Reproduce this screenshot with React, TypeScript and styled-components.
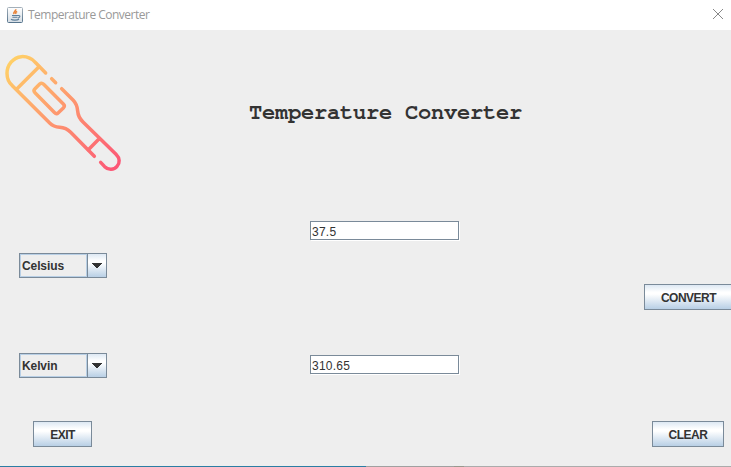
import React, { useState } from "react";
import styled, { createGlobalStyle } from "styled-components";

const GlobalStyle = createGlobalStyle`
  * { box-sizing: border-box; }
  html, body { margin: 0; padding: 0; overflow: hidden; background: #eeeeee; }
`;

const Frame = styled.div`
  display: flex;
  flex-direction: column;
  width: 731px;
  height: 467px;
  overflow: hidden;
  background: #eeeeee;
  color: #333333;
  font-family: "Liberation Sans", Arial, sans-serif;
  font-size: 12px;
`;

const TitleBar = styled.header`
  display: flex;
  align-items: center;
  flex: 0 0 30px;
  padding: 0 7px;
  background: #ffffff;
`;

const TitleText = styled.span`
  flex: 1;
  margin-left: 5px;
  color: #999999;
  font: 12px/16px "Open Sans", "Noto Sans", sans-serif;
  letter-spacing: -0.52px;
`;

const CloseButton = styled.button`
  display: flex;
  margin-top: -2px;
  padding: 0;
  border: 0;
  background: none;
`;

const Content = styled.main`
  display: flex;
  flex-direction: column;
  flex: 1;
`;

const Banner = styled.section`
  display: flex;
  height: 191px;
  padding-top: 15px;
`;

const Heading = styled.h1`
  margin: 53px 0 0 119px;
  font: bold 22px/28px "Nimbus Mono PS", "FreeMono", "Courier New", "Liberation Mono", monospace;
  letter-spacing: -0.2px;
  white-space: pre;
`;

const Row = styled.div<{ $gap?: number; $left?: number }>`
  display: flex;
  align-items: flex-start;
  flex: none;
  margin-top: ${(p) => p.$gap ?? 0}px;
  padding-left: ${(p) => p.$left ?? 0}px;
`;

const Field = styled.input<{ $left?: number; $top?: number }>`
  width: 149px;
  height: 19px;
  margin: ${(p) => p.$top ?? 0}px 0 0 ${(p) => p.$left ?? 0}px;
  padding: 2px 1px 0;
  border: 1px solid #7a8a99;
  border-radius: 0;
  outline: none;
  background: #ffffff;
  box-shadow: 1px 1px 0 #ffffff;
  color: #333333;
  font: 12px/15px "Liberation Sans", Arial, sans-serif;
  letter-spacing: 0.25px;
`;

const Combo = styled.div`
  display: flex;
  width: 88px;
  height: 25px;
  border: 1px solid #7a8a99;
`;

const ComboValue = styled.div`
  flex: 1;
  border: 1px solid #b8cfe5;
  padding-left: 1px;
  font-weight: bold;
  line-height: 22px;
  letter-spacing: -0.1px;
`;

const ComboArrow = styled.div`
  display: flex;
  align-items: center;
  justify-content: center;
  width: 19px;
  border-left: 1px solid #7a8a99;
  background: linear-gradient(#dde8f3 0%, #ffffff 30%, #ffffff 38%, #b8cfe5 100%);
`;

const MetalButton = styled.button<{ $width: number; $left?: number }>`
  flex: none;
  width: ${(p) => p.$width}px;
  height: 26px;
  margin-left: ${(p) => p.$left ?? 0}px;
  padding: 1px 0 0;
  border: 1px solid #7a8a99;
  border-radius: 0;
  background: linear-gradient(#dde8f3 0%, #ffffff 30%, #ffffff 38%, #b8cfe5 100%);
  color: #333333;
  font: bold 12px/22px "Liberation Sans", Arial, sans-serif;
  letter-spacing: -0.5px;
`;

const BottomEdge = styled.footer`
  display: flex;
  flex: 0 0 1px;
`;

const EdgePart = styled.span<{ $width?: number; $color: string }>`
  flex: ${(p) => (p.$width ? `0 0 ${p.$width}px` : "1")};
  background: ${(p) => p.$color};
`;

function JavaIcon() {
  return (
    <svg width="16" height="16" viewBox="0 0 16 16">
      <defs>
        <linearGradient id="tile" x1="0" y1="0" x2="0" y2="1">
          <stop offset="0" stopColor="#ffffff" />
          <stop offset="1" stopColor="#d5dde4" />
        </linearGradient>
        <linearGradient id="tileEdge" x1="0" y1="0" x2="0" y2="1">
          <stop offset="0" stopColor="#a4b0ba" />
          <stop offset="1" stopColor="#56748c" />
        </linearGradient>
      </defs>
      <rect x=".5" y=".5" width="15" height="15" rx="1" fill="url(#tile)" stroke="url(#tileEdge)" />
      <path d="M8.7 2.2c.7 1.8-3.3 2.7-1.5 4.9M10.2 4.4c-1.9.8-1.7 1.5-1.1 2.5" fill="none" stroke="#e9853b" strokeWidth="1.6" />
      <path d="M5 8.5h6M5.4 10.2h5M11 8.6c2.8-.4 2.3 2-.2 2.5M4 12.3c1.5 1.1 6.5 1 8 0" fill="none" stroke="#5e7e99" strokeWidth="1.1" />
    </svg>
  );
}

function Thermometer() {
  return (
    <svg width="130" height="135" viewBox="0 0 390 405">
      <defs>
        <linearGradient id="warm" gradientUnits="userSpaceOnUse" x1="30" y1="45" x2="350" y2="365">
          <stop offset="0" stopColor="#ffd067" />
          <stop offset="1" stopColor="#fc5776" />
        </linearGradient>
      </defs>
      <g fill="none" stroke="url(#warm)" strokeWidth="10.5" strokeLinecap="round" strokeLinejoin="round">
        <path d="M137 84L107 53C94 39 79 34 64 35C39 37 21 60 21 85C21 101 26 113 37 122L149 234C158 243 166 246 179 247C194 248 204 254 212 262L283 334" />
        <path d="M117 65L51 131M155 101L167 113" />
        <path d="M185 131L219 165C229 175 232 185 233 198C234 213 240 222 249 231L348 328C360 340 360 354 351 364C342 375 325 376 314 365L302 352M299 280L265 314" />
        <path d="M119 117L105 131Q99 137 105 143L164 203Q169 209 175 203L190 189Q196 183 190 177L131 118Q125 112 119 117Z" />
      </g>
    </svg>
  );
}

function UnitCombo({ value }: { value: string }) {
  return (
    <Combo role="combobox" aria-expanded={false}>
      <ComboValue>{value}</ComboValue>
      <ComboArrow>
        <svg width="10" height="5" viewBox="0 0 10 5" shapeRendering="crispEdges">
          <path d="M0 0H10V1H9V2H8V3H7V4H6V5H4V4H3V3H2V2H1V1H0Z" fill="#333333" />
        </svg>
      </ComboArrow>
    </Combo>
  );
}

export default function App() {
  const [input, setInput] = useState("37.5");
  const [output, setOutput] = useState("310.65");
  const convert = () => setOutput(String(Number((Number(input) + 273.15).toFixed(2))));
  const clear = () => {
    setInput("");
    setOutput("");
  };

  return (
    <>
      <GlobalStyle />
      <Frame>
        <TitleBar>
          <JavaIcon />
          <TitleText>Temperature Converter</TitleText>
          <CloseButton aria-label="Close">
            <svg width="12" height="12" viewBox="0 0 12 12">
              <path d="M1 1L11 11M11 1L1 11" fill="none" stroke="#888888" strokeWidth="1" />
            </svg>
          </CloseButton>
        </TitleBar>
        <Content>
          <Banner>
            <Thermometer />
            <Heading>Temperature Converter</Heading>
          </Banner>
          <Row $left={310}>
            <Field value={input} onChange={(e) => setInput(e.target.value)} />
          </Row>
          <Row $gap={13} $left={19}>
            <UnitCombo value="Celsius" />
          </Row>
          <Row $gap={6} $left={644}>
            <MetalButton $width={89} onClick={convert}>CONVERT</MetalButton>
          </Row>
          <Row $gap={43} $left={19}>
            <UnitCombo value="Kelvin" />
            <Field $left={203} $top={2} value={output} readOnly />
          </Row>
          <Row $gap={43} $left={33}>
            <MetalButton $width={59}>EXIT</MetalButton>
            <MetalButton $width={72} $left={560} onClick={clear}>CLEAR</MetalButton>
          </Row>
        </Content>
        <BottomEdge>
          <EdgePart $width={366} $color="#2b7da3" />
          <EdgePart $width={88} $color="#a0a0a0" />
          <EdgePart $width={10} $color="#98988e" />
          <EdgePart $color="#ababab" />
        </BottomEdge>
      </Frame>
    </>
  );
}
